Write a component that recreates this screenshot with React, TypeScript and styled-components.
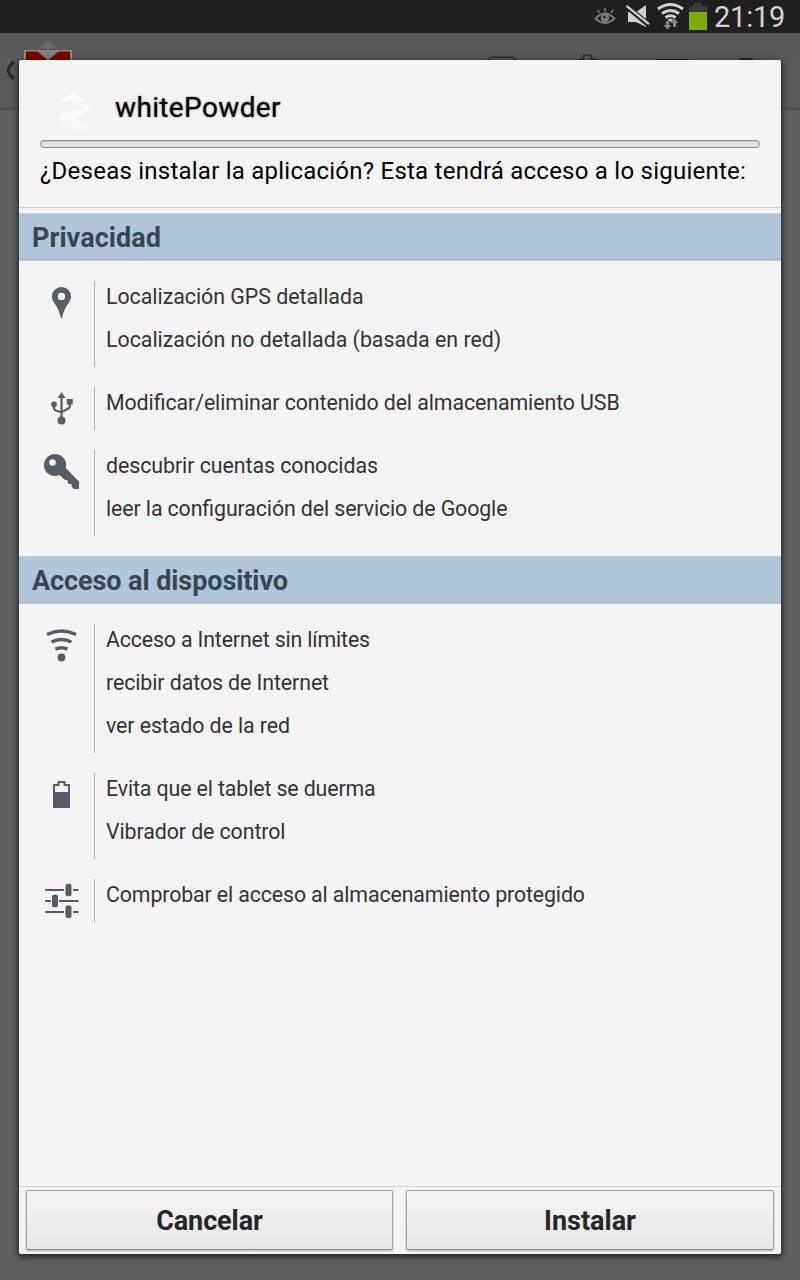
import React from "react";
import styled, { createGlobalStyle } from "styled-components";

const INK = "#555e66";

const GlobalStyle = createGlobalStyle`
  * { box-sizing: border-box; }
  html, body { margin: 0; padding: 0; }
  body { background: #5f5f5f; font-family: Roboto, "Noto Sans", sans-serif; }
`;

const Screen = styled.div`
  width: 800px;
  height: 1280px;
  overflow: hidden;
  position: relative;
  background: #5f5f5f;
`;

const StatusBar = styled.header`
  height: 33px;
  background: #1f1f1f;
  display: flex;
  justify-content: flex-end;
`;

const StatusIcons = styled.svg`
  display: block;
  width: 124px;
  height: 33px;
`;

const Clock = styled.time`
  width: 86px;
  font-size: 29px;
  line-height: 34px;
  letter-spacing: -0.2px;
  color: #d2d2d2;
  white-space: nowrap;
`;

const ActionBar = styled.div`
  height: 76px;
  background: linear-gradient(#575757, #5b5b5b);
  border-bottom: 1px solid #484848;
  box-shadow: 0 1px 1px #555;
`;

const ActionArt = styled.svg`
  display: block;
`;

const Dialog = styled.section`
  position: absolute;
  left: 19px;
  top: 60px;
  width: 762px;
  height: 1194px;
  display: flex;
  flex-direction: column;
  background: #f4f4f4;
  border-radius: 2px;
  box-shadow: 0 2px 6px 1px rgba(0, 0, 0, 0.65);
`;

const DialogHeader = styled.div`
  height: 148px;
  padding: 20px 21px 0;
  border-bottom: 1px solid #cfcfcf;
  margin-bottom: 5px;
`;

const TitleRow = styled.div`
  display: flex;
  align-items: center;
  height: 60px;
`;

const AppIcon = styled.svg`
  width: 75px;
  height: 60px;
`;

const Title = styled.h1<{ $track: number }>`
  margin: 0;
  font-size: 28px;
  font-weight: 400;
  line-height: 55px;
  height: 60px;
  color: #000;
  letter-spacing: ${(p) => p.$track}px;
  text-shadow: 0 0 2px rgba(0, 0, 0, 0.6);
`;

const Track = styled.div`
  height: 8px;
  border: 1px solid #8a8a8a;
  border-radius: 4px;
  background: #e4e4e4;
  box-shadow: inset 0 1px 1px #c8c8c8;
`;

const Question = styled.p<{ $track: number }>`
  margin: 0;
  padding-top: 7px;
  font-size: 24px;
  line-height: 32px;
  color: #000;
  white-space: nowrap;
  letter-spacing: ${(p) => p.$track}px;
`;

const GroupHeading = styled.h2<{ $track: number }>`
  margin: 0;
  height: 48px;
  padding-left: 13px;
  font-size: 27px;
  font-weight: 700;
  line-height: 49px;
  color: #37474f;
  background: #b1c6da;
  border-top: 1px solid #c3d0dc;
  border-bottom: 1px solid #c9ced3;
  box-shadow: inset 0 -1px 0 #a5b7c9;
  letter-spacing: ${(p) => p.$track}px;
`;

const PermissionList = styled.div`
  display: flex;
  flex-direction: column;
  gap: 20px;
  padding: 20px 0;
`;

const Permission = styled.div`
  display: flex;
  padding-left: 24px;
`;

const IconSlot = styled.svg`
  width: 38px;
  height: 43px;
  margin-right: 13px;
  flex: none;
`;

const Lines = styled.div`
  border-left: 1px solid #aeaeae;
  padding-left: 11px;
`;

const Line = styled.p<{ $track: number }>`
  margin: 0;
  height: 43px;
  font-size: 21.33px;
  line-height: 32px;
  color: #333;
  white-space: nowrap;
  font-feature-settings: "liga" 1;
  letter-spacing: ${(p) => p.$track}px;
`;

const Footer = styled.footer`
  margin-top: auto;
  height: 68px;
  display: grid;
  grid-template-columns: 367px 368px;
  gap: 13px;
  padding: 3px 7px 4px;
  border-top: 1px solid #cfcfcf;
`;

const Button = styled.button<{ $track: number }>`
  padding: 2px 0 0;
  font: 700 27px/56px Roboto, sans-serif;
  letter-spacing: ${(p) => p.$track}px;
  color: #262626;
  border: 1px solid #a2a2a2;
  border-bottom-color: #8e8e8e;
  border-radius: 2px;
  background: linear-gradient(#f5f5f5, #e6e6e6);
  box-shadow: 0 1px 2px rgba(0, 0, 0, 0.3);
`;

const glyphs: Record<string, React.ReactNode> = {
  pin: (
    <path fillRule="evenodd" d="M18.500 6a9.500 9.500 0 0 1 9.500 9.500c0 6.500-6.500 8.500-9 21.800h-1C15.500 24 9 22 9 15.500A9.500 9.500 0 0 1 18.500 6zm0 5.700a3.700 3.700 0 1 0 0 7.400a3.700 3.700 0 0 0 0-7.400z" />
  ),
  usb: (
    <>
      <path d="M18.500 5l4 6h-8zM23.700 12h6v5.500h-6z" />
      <circle cx="11" cy="17.500" r="2.900" />
      <circle cx="18.500" cy="33.500" r="4" />
      <path fill="none" stroke={INK} strokeWidth="2.200" d="M18.500 9v24M11 17v3.500q0 2.500 2.300 3.200l5.200 1.500M26.800 16v3q0 1.700-1.500 2.500l-6.800 3.700" />
    </>
  ),
  key: (
    <path fillRule="evenodd" d="M12.300 4a11 11 0 0 1 10.500 14L36 31.500V39h-5l-2.500-2.500v-2.500h-2.500l-1.500-1.500v-2.500h-2.500L16.500 25A11 11 0 1 1 12.300 4zM9.500 9.200a3.300 3.300 0 1 0 0 6.600a3.300 3.300 0 0 0 0-6.600z" />
  ),
  wifi: (
    <>
      <circle cx="18.500" cy="33.500" r="3.900" />
      <g fill="none" stroke={INK} strokeWidth="3.600">
        <path d="M4 10.500q14.500-7 29 0M8.500 18q10-5 20 0M12.500 25.200q6-3 12 0" />
      </g>
    </>
  ),
  battery: (
    <path fillRule="evenodd" d="M10 11h4.500V8h8v3H27v24H10zM12 13v6h13v-6h-4.500v-3h-4v3z" />
  ),
  sliders: (
    <>
      <path d="M2 10h19v2H2zM30 10h5.500v2H30zM2 21h6v2H2zM16 21h19.500v2H16zM2 32h19v2H2zM30 32h5.500v2H30z" />
      <rect x="22.500" y="4.700" width="6" height="12.500" rx="2" />
      <rect x="9" y="15.700" width="6" height="12.500" rx="2" />
      <rect x="22.500" y="26.500" width="6" height="12.500" rx="2" />
    </>
  ),
};

type Row = { icon: string; lines: [string, number][] };
const groups: { name: string; track: number; rows: Row[] }[] = [
  {
    name: "Privacidad",
    track: 0.06,
    rows: [
      { icon: "pin", lines: [["Localización GPS detallada", -0.02], ["Localización no detallada (basada en red)", 0]] },
      { icon: "usb", lines: [["Modificar/eliminar contenido del almacenamiento USB", -0.08]] },
      { icon: "key", lines: [["descubrir cuentas conocidas", -0.05], ["leer la configuración del servicio de Google", -0.105]] },
    ],
  },
  {
    name: "Acceso al dispositivo",
    track: -0.08,
    rows: [
      { icon: "wifi", lines: [["Acceso a Internet sin límites", -0.15], ["recibir datos de Internet", -0.08], ["ver estado de la red", -0.08]] },
      { icon: "battery", lines: [["Evita que el tablet se duerma", -0.12], ["Vibrador de control", -0.08]] },
      { icon: "sliders", lines: [["Comprobar el acceso al almacenamiento protegido", -0.12]] },
    ],
  },
];

export default function App() {
  return (
    <Screen>
      <GlobalStyle />
      <StatusBar>
        <StatusIcons viewBox="590 0 124 33">
          <g fill="none" stroke="#777" strokeWidth="1.500">
            <path d="M595.500 18.500q9.500-10 19 0q-9.500 9-19 0z" strokeWidth="2" />
            <path d="M605 8v4M597.500 10l2 3M613 10l-2 3" />
          </g>
          <circle cx="605" cy="18" r="4.300" fill="#777" />
          <circle cx="604.300" cy="17" r="1.300" fill="#1f1f1f" />
          <path fill="#d0d0d0" d="M628 12h8l10-7v22l-10-5h-8z" />
          <path stroke="#1f1f1f" strokeWidth="5.500" d="M625 5l24 20" />
          <path stroke="#d0d0d0" strokeWidth="2.300" d="M626.500 5.800l22.500 18.400" />
          <g fill="none" stroke="#d0d0d0" strokeWidth="3.100">
            <path d="M658 9q12.500-9 25 0M662 13.500q8.500-6 17 0M665.500 17.500q5-3.500 10 0" />
          </g>
          <path fill="#d0d0d0" d="M667.500 19.500q3-1.500 6 0l-3 2.500z" />
          <path fill="#858585" d="M666 21h3v4h2.500l-4 4.500l-4-4.500h2.500zM673 27v-4h-2.500l4-4.500l4 4.500H676v4z" />
          <path fill="#3a3a3a" d="M694 3h8v3h5v6h-18V6h5z" />
          <path fill="#7aab00" d="M689 12h18v18h-18z" />
        </StatusIcons>
        <Clock>21:19</Clock>
      </StatusBar>
      <ActionBar>
        <ActionArt width="800" height="60" viewBox="0 33 800 60">
          <path fill="#686868" d="M38 48.500l10-8l10 8z" />
          <path fill="#8a8a8a" d="M24 50h48v20H24z" />
          <path fill="#7c0000" d="M26 51.500h44v20H26z" />
          <path fill="#808080" d="M37 51h22L48 60.500z" />
          <path fill="none" stroke="#2c2c2c" strokeWidth="3.400" d="M14 61.500q-5.500 5-5.500 8.800q0 3.800 5.500 8.800" />
          <g fill="none" stroke="#2c2c2c" strokeWidth="1.500">
            <path d="M487 61l4-3.700h22l4 3.700M583.500 60v-5h8v5M579 59.500h4M592 59.500h4" />
          </g>
          <path fill="#2c2c2c" d="M656 59h33v3h-33zM739 58h14v3h-14z" />
        </ActionArt>
      </ActionBar>
      <Dialog>
        <DialogHeader>
          <TitleRow>
            <AppIcon viewBox="40 80 75 60">
              <defs>
                <linearGradient id="snow" gradientUnits="userSpaceOnUse" x1="0" y1="104" x2="0" y2="134">
                  <stop offset="0" stopColor="#fff" />
                  <stop offset="0.5" stopColor="#fff" stopOpacity="0.6" />
                  <stop offset="1" stopColor="#fff" stopOpacity="0.1" />
                </linearGradient>
              </defs>
              <path fill="#fff" d="M60 101l8-5l4.500-4l5 4l6 5l-2 .5l-3-1.500l2 4l-5-4l-2 4l-3-4l-4 2z" />
              <path fill="none" stroke="#fff" strokeDasharray="1.500 2" d="M51 103.500l9-2.500M83 100l12 4" />
              <path fill="url(#snow)" d="M77 104q12-1 12 4q-1 5-10 7q-5 3 0 6q8 4 15 9v4q-18-2-30-9q-8-8 0-12q9-3 17-3q8-2-4-6z" />
            </AppIcon>
            <Title $track={0.36}>whitePowder</Title>
          </TitleRow>
          <Track />
          <Question $track={0.235}>¿Deseas instalar la aplicación? Esta tendrá acceso a lo siguiente:</Question>
        </DialogHeader>
        {groups.map((g) => (
          <React.Fragment key={g.name}>
            <GroupHeading $track={g.track}>{g.name}</GroupHeading>
            <PermissionList>
              {g.rows.map((r) => (
                <Permission key={r.icon}>
                  <IconSlot viewBox="0 0 38 43" fill={INK}>{glyphs[r.icon]}</IconSlot>
                  <Lines>
                    {r.lines.map(([t, track]) => (
                      <Line key={t} $track={track}>{t}</Line>
                    ))}
                  </Lines>
                </Permission>
              ))}
            </PermissionList>
          </React.Fragment>
        ))}
        <Footer>
          <Button $track={-0.1}>Cancelar</Button>
          <Button $track={0}>Instalar</Button>
        </Footer>
      </Dialog>
    </Screen>
  );
}
